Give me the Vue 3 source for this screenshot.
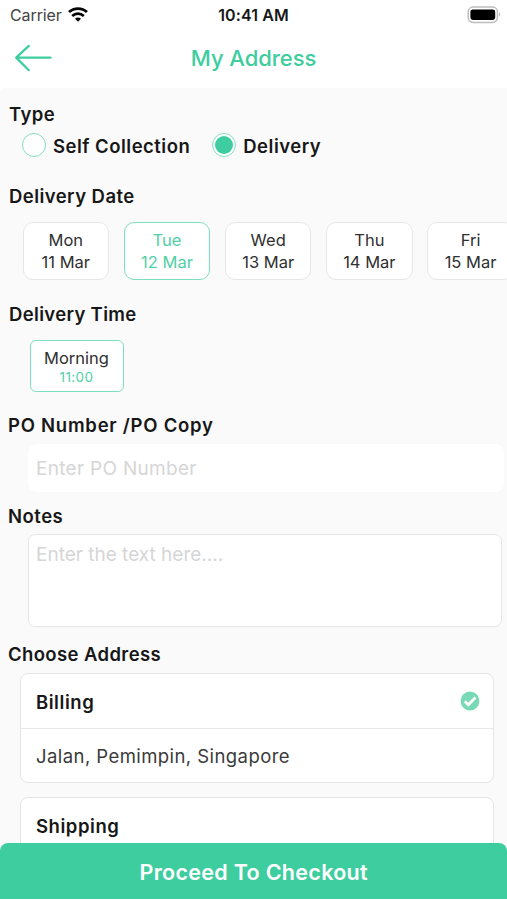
<script setup>
import { ref } from 'vue'

const types = ['Self Collection', 'Delivery']
const type = ref('Delivery')
const days = [
  { day: 'Mon', date: '11 Mar' },
  { day: 'Tue', date: '12 Mar' },
  { day: 'Wed', date: '13 Mar' },
  { day: 'Thu', date: '14 Mar' },
  { day: 'Fri', date: '15 Mar' },
]
const selectedDay = ref('Tue')
</script>

<template>
  <div class="screen">
    <div class="status">
      <div class="carrier">
        <span>Carrier</span>
        <svg width="20" height="15" viewBox="0 0 20 15" fill="none" stroke="#050505" stroke-width="2.7">
          <path d="M1 5.1C6 .4 14 .4 19 5.1" />
          <path d="M4.2 8.9C7.6 5.8 12.4 5.8 15.8 8.9" />
          <path d="M7 11.7C8.8 10.2 11.2 10.2 13 11.7L10 14.7Z" fill="#050505" stroke="none" />
        </svg>
      </div>
      <span class="clock">10:41 AM</span>
      <svg class="battery" width="34" height="18" viewBox="0 0 34 18">
        <rect x="1.2" y="1" width="29.2" height="15.4" rx="4.8" fill="#fff" stroke="#bdbdbd" stroke-width="1.5" />
        <rect x="3.4" y="3.4" width="24.8" height="10.6" rx="2.4" fill="#000" />
        <path d="M32 6.6c1.6.7 1.6 3.5 0 4.2z" fill="#b4b4b4" />
      </svg>
    </div>

    <header class="header">
      <svg width="38" height="28" viewBox="0 0 38 28" fill="none" stroke="#3ecd9e" stroke-width="2.2" stroke-linecap="round" stroke-linejoin="round">
        <path d="M36.5 12.6H2.2M14.8 .9L2.2 12.6l12.6 12.6" />
      </svg>
      <h1>My Address</h1>
    </header>

    <main class="content">
      <h2 class="l-type">Type</h2>
      <div class="types">
        <div v-for="t in types" :key="t" class="type" @click="type = t">
          <span class="radio"><i v-if="type === t"></i></span>
          <span>{{ t }}</span>
        </div>
      </div>

      <h2 class="l-date">Delivery Date</h2>
      <div class="days">
        <div v-for="d in days" :key="d.day" class="day" :class="{ active: d.day === selectedDay }" @click="selectedDay = d.day">
          <span>{{ d.day }}</span>
          <span>{{ d.date }}</span>
        </div>
      </div>

      <h2 class="l-time">Delivery Time</h2>
      <div class="slot">
        <span class="slot-name">Morning</span>
        <span class="slot-hour">11:00</span>
      </div>

      <h2 class="l-po">PO Number /PO Copy</h2>
      <input class="po" type="text" placeholder="Enter PO Number" />

      <h2 class="l-notes">Notes</h2>
      <textarea class="notes" placeholder="Enter the text here...."></textarea>

      <h2 class="l-address">Choose Address</h2>
      <section class="card">
        <div class="card-head">
          <h3>Billing</h3>
          <svg width="20" height="20" viewBox="0 0 20 20">
            <circle cx="10" cy="10" r="9.4" fill="#78d9b7" />
            <path d="M4.8 10.2l3.6 3.5 7-7.1" fill="none" stroke="#fff" stroke-width="2.8" />
          </svg>
        </div>
        <p>Jalan, Pemimpin, Singapore</p>
      </section>
      <section class="card">
        <div class="card-head">
          <h3>Shipping</h3>
        </div>
      </section>
    </main>

    <button class="checkout">Proceed To Checkout</button>
  </div>
</template>

<style>
body {
  background: #fff;
}
</style>

<style scoped>
.screen {
  width: 507px;
  height: 900px;
  display: grid;
  grid-template-rows: 30px 58px 754.5px 56.5px;
  overflow: hidden;
  background: #fff;
  color: #171717;
  font-family: Inter, "Liberation Sans", sans-serif;
}
.screen * {
  box-sizing: border-box;
}
h1, h2, h3, p {
  margin: 0;
}
.status {
  display: grid;
  grid-template-columns: 1fr auto 1fr;
  align-items: center;
  padding: 0 6px 0 10px;
}
.carrier {
  display: flex;
  align-items: center;
  gap: 6px;
  font-size: 16px;
  color: #444;
  letter-spacing: -0.1px;
}
.carrier svg {
  margin-top: -2px;
}
.clock {
  margin-left: -4px;
  font-size: 16px;
  font-weight: 600;
  letter-spacing: 0.12px;
}
.battery {
  justify-self: end;
  margin-top: -1px;
}
.header {
  display: grid;
  grid-template-columns: 38px 1fr 38px;
  align-items: center;
  padding: 0 14px;
}
h1 {
  margin-top: -2px;
  text-align: center;
  font-size: 22px;
  line-height: 28px;
  font-weight: 500;
  letter-spacing: -0.05px;
  color: #3ecd9e;
  white-space: nowrap;
}
.content {
  display: flex;
  flex-direction: column;
  background: #fafafa;
  border-top-left-radius: 5px;
  overflow: hidden;
}
.content > * {
  flex-shrink: 0;
}
h2 {
  height: 24px;
  padding-left: 9px;
  font-size: 18.5px;
  line-height: 23px;
  font-weight: 600;
  letter-spacing: 0.38px;
  white-space: nowrap;
}
.l-type {
  margin-top: 15px;
}
.types {
  display: flex;
  height: 30px;
  margin-top: 4px;
  padding-left: 22px;
  gap: 22px;
}
.type {
  display: flex;
  align-items: center;
  gap: 7px;
  font-size: 18.5px;
  font-weight: 600;
  letter-spacing: 0.49px;
}
.radio {
  width: 24px;
  height: 24px;
  margin-top: -2px;
  display: grid;
  place-items: center;
  border: 1px solid #83dfc0;
  border-radius: 50%;
  background: #fff;
}
.radio i {
  width: 18px;
  height: 18px;
  border-radius: 50%;
  background: #3ecd9e;
}
.l-date {
  margin-top: 24px;
  letter-spacing: 0.44px;
}
.days {
  display: flex;
  gap: 14.6px;
  margin-top: 13px;
  padding-left: 22.5px;
}
.day {
  flex: 0 0 86.6px;
  height: 57.5px;
  display: flex;
  flex-direction: column;
  align-items: center;
  padding-top: 7px;
  border: 1px solid #e6e6e6;
  border-radius: 10px;
  background: #fff;
  color: #303030;
  font-size: 16.5px;
  line-height: 21.5px;
}
.day.active {
  border-color: #7edfbd;
  color: #51d0a6;
}
.l-time {
  margin-top: 23.5px;
  letter-spacing: 0.33px;
}
.slot {
  width: 94px;
  height: 52px;
  display: flex;
  flex-direction: column;
  align-items: center;
  margin: 13px 0 0 29.5px;
  padding-top: 7px;
  border: 1px solid #7edfbd;
  border-radius: 6px;
  background: #fff;
}
.slot-name {
  font-size: 16.5px;
  line-height: 21px;
  color: #303030;
}
.slot-hour {
  font-size: 13.5px;
  line-height: 17px;
  letter-spacing: 0.4px;
  color: #51d0a6;
}
.l-po {
  margin-top: 22px;
  padding-left: 8px;
  letter-spacing: 0.75px;
}
.po, .notes {
  display: block;
  margin: 0 0 0 28px;
  padding: 0 8px;
  border: 0;
  outline: 0;
  background: #fff;
  font-family: inherit;
  font-size: 19px;
}
.po {
  width: 476px;
  height: 48px;
  margin-top: 6px;
  border-radius: 9px;
  letter-spacing: 0.3px;
}
.po::placeholder, .notes::placeholder {
  color: #d6d6d6;
  opacity: 1;
}
.l-notes {
  margin-top: 13px;
  padding-left: 8px;
  letter-spacing: 0.5px;
}
.notes {
  width: 474px;
  height: 93px;
  margin-top: 5px;
  padding: 7px 7px;
  border: 1px solid #e6e6e6;
  border-radius: 7px;
  line-height: 26px;
  resize: none;
}
.l-address {
  margin-top: 15px;
  padding-left: 8px;
  line-height: 24px;
}
.card {
  width: 474px;
  height: 109.5px;
  margin: 7px 0 0 20.4px;
  border: 1px solid #e5e5e5;
  border-radius: 8px;
  background: #fff;
}
.card + .card {
  margin-top: 14.5px;
}
.card-head {
  height: 55px;
  display: flex;
  align-items: center;
  justify-content: space-between;
  padding: 0 13px 0 14.6px;
  border-bottom: 1px solid #e8e8e8;
}
h3 {
  padding-top: 1px;
  font-size: 18.5px;
  line-height: 24px;
  font-weight: 600;
  letter-spacing: 0.55px;
}
.card p {
  padding: 15px 14.6px 0;
  font-size: 18.5px;
  line-height: 24px;
  letter-spacing: 0.43px;
  color: #3a3a3a;
}
.checkout {
  width: 506.5px;
  border: 0;
  border-radius: 8px 8px 0 0;
  padding: 2px 0 0 1px;
  background: #3ecd9e;
  color: #fff;
  font-family: inherit;
  font-size: 21.5px;
  font-weight: 600;
  letter-spacing: 0.3px;
}
</style>
